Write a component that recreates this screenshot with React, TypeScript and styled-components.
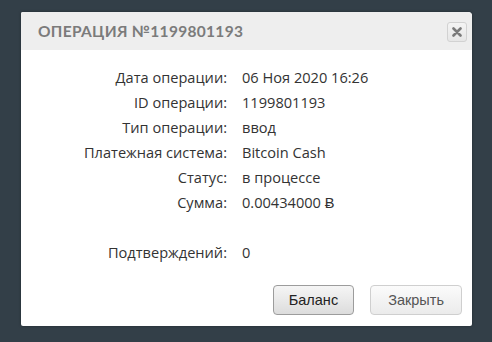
import styled, { createGlobalStyle } from "styled-components";

const GlobalStyle = createGlobalStyle`
    html, body {
        margin: 0;
        padding: 0;
        background-color: #333f48;
        height: 100%;
    }
    body {
        font-family: "Open Sans", "Liberation Sans", sans-serif;
    }
`

const Page = styled.div`
    width: 492px;
    height: 342px;
    padding: 12px 0 0 21px;
    box-sizing: border-box;
`

const Dialog = styled.div`
    width: 451px;
    height: 314px;
    background-color: #ffffff;
    border-radius: 2px 4px 2px 2px;
    box-shadow: 0 0 3px rgba(0, 0, 0, 0.35);
    display: flex;
    flex-direction: column;
    overflow: hidden;
`

const Header = styled.div`
    height: 38px;
    background-color: #eeeeee;
    display: flex;
    align-items: center;
    justify-content: space-between;
    padding: 0 5px 0 17px;
`

const Title = styled.h1`
    margin: 0;
    font-family: "Lato", "Open Sans", sans-serif;
    font-size: 15.5px;
    font-weight: 700;
    letter-spacing: 0.3px;
    color: #7b7b7b;
    text-transform: uppercase;
`

const CloseButton = styled.button`
    width: 20px;
    height: 20px;
    padding: 0;
    margin-top: 1px;
    border: 1px solid #d2d2d2;
    border-radius: 3px;
    background: linear-gradient(#f4f4f4, #e6e6e6);
    display: flex;
    align-items: center;
    justify-content: center;
    cursor: pointer;
`

const Body = styled.div`
    flex: 1;
    padding-top: 15px;
`

const InfoGrid = styled.dl`
    margin: 0;
    display: grid;
    grid-template-columns: 206px 1fr;
    column-gap: 15px;
    grid-auto-rows: 25px;
    font-size: 14.6px;
    color: #333333;

    dt, dd {
        margin: 0;
        line-height: 25px;
        white-space: nowrap;
    }
    dt {
        text-align: right;
    }
`

const Spacer = styled.div<{ $rows: number }>`
    grid-column: 1 / -1;
    grid-row: span ${(p) => p.$rows};
`

const Footer = styled.div`
    display: flex;
    justify-content: flex-end;
    gap: 16px;
    padding: 0 10px 11px 0;
`

const Button = styled.button<{ $primary?: boolean }>`
    height: 30px;
    padding: 0 ${(p) => (p.$primary ? 15 : 17)}px;
    font-family: "Liberation Sans", Arial, sans-serif;
    font-size: 14.5px;
    color: ${(p) => (p.$primary ? "#222222" : "#555555")};
    border: 1px solid ${(p) => (p.$primary ? "#9c9c9c" : "#cfcfcf")};
    border-radius: 4px;
    background: ${(p) =>
        p.$primary
            ? "linear-gradient(#f5f5f5, #e9e9e9 50%, #dcdcdc)"
            : "linear-gradient(#fbfbfb, #f3f3f3 50%, #ebebeb)"};
    cursor: pointer;
`

const rows: [string, string][] = [
    ["Дата операции:", "06 Ноя 2020 16:26"],
    ["ID операции:", "1199801193"],
    ["Тип операции:", "ввод"],
    ["Платежная система:", "Bitcoin Cash"],
    ["Статус:", "в процессе"],
    ["Сумма:", "0.00434000 Ƀ"],
]

export default function App() {
    return (
        <>
            <GlobalStyle />
            <Page>
                <Dialog>
                    <Header>
                        <Title>Операция №1199801193</Title>
                        <CloseButton aria-label="close">
                            <svg width="10" height="10" viewBox="0 0 10 10">
                                <path d="M1.5 1.5 L8.5 8.5 M8.5 1.5 L1.5 8.5" stroke="#7a7a7a" strokeWidth="2.6" strokeLinecap="round" />
                            </svg>
                        </CloseButton>
                    </Header>
                    <Body>
                        <InfoGrid>
                            {rows.map(([label, value]) => [
                                <dt key={label}>{label}</dt>,
                                <dd key={label + "v"}>{value}</dd>,
                            ])}
                            <Spacer $rows={1} />
                            <dt>Подтверждений:</dt>
                            <dd>0</dd>
                        </InfoGrid>
                    </Body>
                    <Footer>
                        <Button $primary>Баланс</Button>
                        <Button>Закрыть</Button>
                    </Footer>
                </Dialog>
            </Page>
        </>
    )
}
